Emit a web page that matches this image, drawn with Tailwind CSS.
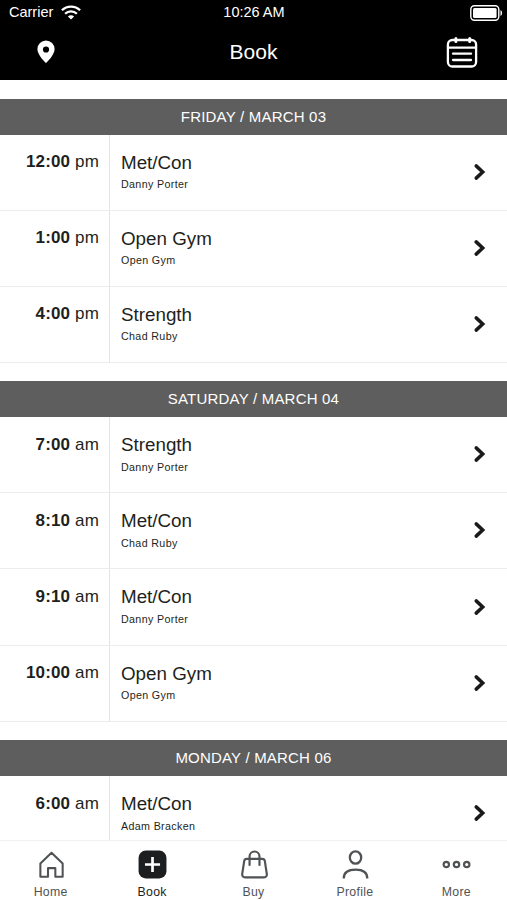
<!DOCTYPE html>
<html lang="en">
<head>
  <meta charset="UTF-8">
  <meta name="viewport" content="width=device-width, initial-scale=1.0">
  <script src="https://cdn.jsdelivr.net/npm/@tailwindcss/browser@4"></script>
  <title>Book</title>
</head>
<body class="bg-white font-['Liberation_Sans',sans-serif] text-[#1e1f20]">
  <div class="flex flex-col h-screen overflow-hidden">
    <header class="shrink-0 h-20 bg-black text-white">
      <!-- status bar -->
      <div class="grid grid-cols-3 items-center h-6 pl-[9px] pr-1">
        <div class="flex items-center gap-2 text-[14.5px] leading-6">
          <span>Carrier</span>
          <svg width="20" height="15" viewBox="0 0 20 15" fill="none" stroke="currentColor" stroke-width="2.3">
            <path d="M.9 5.3a13 13 0 0 1 18.2 0"/>
            <path d="M4.1 8.7a8.4 8.4 0 0 1 11.8 0"/>
            <path d="M10 14.6 6.9 11.6a4.4 4.4 0 0 1 6.2 0z" fill="currentColor" stroke="none"/>
          </svg>
        </div>
        <div class="text-center text-[14.5px] leading-6 -ml-1">10:26 AM</div>
        <svg class="justify-self-end mt-px" width="33" height="16" viewBox="0 0 33 16" fill="none">
          <rect x=".8" y=".8" width="28" height="14.4" rx="3.6" stroke="white" stroke-width="1.4"/>
          <rect x="3" y="3" width="23.6" height="10" rx="1.5" fill="white"/>
          <path d="M30.5 5c2.1.8 2.1 5.2 0 6z" fill="white"/>
        </svg>
      </div>
      <!-- title bar -->
      <div class="grid grid-cols-[1fr_auto_1fr] items-center h-14 pl-[37px] pr-[29px]">
        <svg width="18" height="24" viewBox="0 0 18 24" fill="white">
          <path fill-rule="evenodd" d="M9 .5A8.600 8.600 0 0 0 .4 9.100C.4 15.300 9 23.300 9 23.300S17.600 15.300 17.600 9.100A8.600 8.600 0 0 0 9 .5zM9 6.400a3.100 3.100 0 1 1 0 6.200 3.100 3.100 0 0 1 0-6.200z"/>
        </svg>
        <h1 class="text-center text-[21px] leading-7 pr-2">Book</h1>
        <svg class="justify-self-end" width="32" height="32" viewBox="0 0 32 32" fill="none" stroke="white" stroke-width="2.3" stroke-linecap="round">
          <rect x="1.900" y="4" width="28.200" height="26.500" rx="4.500"/>
          <path d="M2 11.600h28M7 17.700h18M7 24h18"/>
          <path d="M9.900 2.400v3.200M23.700 2.400v3.200" stroke-width="3"/>
        </svg>
      </div>
    </header>

    <main id="schedule" class="flex-1 overflow-hidden pt-[18.6px] flex flex-col gap-[18.4px]"></main>

    <nav class="shrink-0 h-[60px] border-t border-[#f0f1f2] bg-white flex text-[12.3px] leading-4 tracking-[0.3px] text-[#505356]">
      <a href="#" class="flex-1 flex flex-col items-center pt-[7px] gap-1">
        <svg width="32" height="32" viewBox="-1 -1 31 31" fill="none" stroke="currentColor" stroke-width="2" stroke-linejoin="round">
          <path d="M4.200 14 15 3.600 25.800 14v12.800h-7.100v-8.300h-7.100v8.300H4.200z"/>
        </svg>
        <span>Home</span>
      </a>
      <a href="#" class="flex-1 flex flex-col items-center pt-[7px] gap-1 text-[#1c1e20]">
        <svg width="32" height="32" viewBox="-1 -1 31 31">
          <rect x="1.500" y="1.500" width="27" height="27" rx="7" fill="currentColor"/>
          <path d="M15 7.700v14.600M7.700 15h14.600" stroke="white" stroke-width="2.600"/>
        </svg>
        <span>Book</span>
      </a>
      <a href="#" class="flex-1 flex flex-col items-center pt-[7px] gap-1">
        <svg width="32" height="32" viewBox="-1 -1 31 31" fill="none" stroke="currentColor" stroke-width="2.100" stroke-linecap="round">
          <path d="M7.500 9.500h15c1.700 0 2.300.9 2.500 2.200l1.900 12.300c.3 2-.8 3.500-2.700 3.500H5.800c-1.900 0-3-1.500-2.700-3.500L5 11.700c.2-1.300.8-2.200 2.500-2.200z"/>
          <path d="M10.200 15.500V7.200a4.800 4.800 0 0 1 9.600 0v8.300"/>
        </svg>
        <span>Buy</span>
      </a>
      <a href="#" class="flex-1 flex flex-col items-center pt-[7px] gap-1">
        <svg width="32" height="32" viewBox="-1 -1 31 31" fill="none" stroke="currentColor" stroke-width="2.200">
          <ellipse cx="15" cy="8.200" rx="5.500" ry="6"/>
          <path d="M3.600 28.500c0-5.600 4.500-8.500 11.400-8.500s11.400 2.900 11.400 8.500"/>
        </svg>
        <span>Profile</span>
      </a>
      <a href="#" class="flex-1 flex flex-col items-center pt-[7px] gap-1">
        <svg width="32" height="32" viewBox="-1 -1 31 31" fill="none" stroke="currentColor" stroke-width="2.100">
          <circle cx="5.100" cy="15" r="2.600"/>
          <circle cx="15" cy="15" r="2.600"/>
          <circle cx="24.900" cy="15" r="2.600"/>
        </svg>
        <span>More</span>
      </a>
    </nav>
  </div>

  <script>
    const days = [
      { label: 'FRIDAY / MARCH 03', classes: [
        ['12:00', 'pm', 'Met/Con', 'Danny Porter'],
        ['1:00', 'pm', 'Open Gym', 'Open Gym'],
        ['4:00', 'pm', 'Strength', 'Chad Ruby'],
      ]},
      { label: 'SATURDAY / MARCH 04', classes: [
        ['7:00', 'am', 'Strength', 'Danny Porter'],
        ['8:10', 'am', 'Met/Con', 'Chad Ruby'],
        ['9:10', 'am', 'Met/Con', 'Danny Porter'],
        ['10:00', 'am', 'Open Gym', 'Open Gym'],
      ]},
      { label: 'MONDAY / MARCH 06', classes: [
        ['6:00', 'am', 'Met/Con', 'Adam Bracken'],
      ]},
    ];

    function row([time, half, name, coach]) {
      return `
        <li class="flex h-[76.1px] border-b border-[#ebeced]">
          <div class="w-[110px] shrink-0 border-r border-[#e2e4e6] pt-[17.5px] pr-2.5 text-right text-[17px] leading-5 tracking-[0.15px]"><b>${time}</b> ${half}</div>
          <div class="flex-1 pl-[11px] pt-4">
            <div class="text-[18.8px] leading-6">${name}</div>
            <div class="text-[10.7px] leading-4 mt-[1.5px] tracking-[0.35px]">${coach}</div>
          </div>
          <svg class="self-center mr-5 mb-px" width="14" height="18" viewBox="0 0 14 18" fill="none" stroke="#1a1a1a" stroke-width="3.500" stroke-linecap="round">
            <path d="M3.200 2.900 9.700 9l-6.500 6.100"/>
          </svg>
        </li>`;
    }

    document.querySelector('#schedule').innerHTML = days.map(day => `
      <section class="shrink-0">
        <h2 class="h-9 bg-[#5e5e5e] text-white text-center text-[15px] leading-[35px] tracking-[0.2px]">${day.label}</h2>
        <ul>${day.classes.map(row).join('')}</ul>
      </section>`).join('');
  </script>
</body>
</html>
